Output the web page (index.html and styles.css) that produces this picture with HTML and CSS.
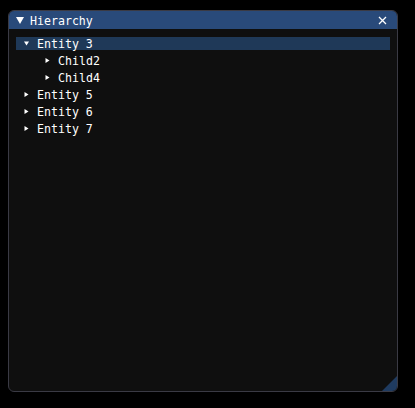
FILE: index.html
```html
<!DOCTYPE html>
<html>
<head>
<meta charset="utf-8">
<link rel="stylesheet" href="styles.css">
</head>
<body>
<div class="window">
  <div class="titlebar">
    <svg class="title-arrow" width="8" height="7" viewBox="0 0 8 7"><polygon points="0,0 8,0 4,7" fill="#fff"/></svg>
    <span class="title">Hierarchy</span>
    <svg class="close" width="9" height="9" viewBox="0 0 9 9"><path d="M1 1 L8 8 M8 1 L1 8" stroke="#fff" stroke-width="1.3"/></svg>
  </div>
  <div class="content">
    <div class="row selected">
      <svg class="arrow" width="5" height="5" viewBox="0 0 5 5"><polygon points="0,0.5 5,0.5 2.5,4.5" fill="#fff"/></svg>
      <span class="label">Entity 3</span>
    </div>
    <div class="row indent">
      <svg class="arrow" width="5" height="5" viewBox="0 0 5 5"><polygon points="0.5,0 4.5,2.5 0.5,5" fill="#fff"/></svg>
      <span class="label">Child2</span>
    </div>
    <div class="row indent">
      <svg class="arrow" width="5" height="5" viewBox="0 0 5 5"><polygon points="0.5,0 4.5,2.5 0.5,5" fill="#fff"/></svg>
      <span class="label">Child4</span>
    </div>
    <div class="row">
      <svg class="arrow" width="5" height="5" viewBox="0 0 5 5"><polygon points="0.5,0 4.5,2.5 0.5,5" fill="#fff"/></svg>
      <span class="label">Entity 5</span>
    </div>
    <div class="row">
      <svg class="arrow" width="5" height="5" viewBox="0 0 5 5"><polygon points="0.5,0 4.5,2.5 0.5,5" fill="#fff"/></svg>
      <span class="label">Entity 6</span>
    </div>
    <div class="row">
      <svg class="arrow" width="5" height="5" viewBox="0 0 5 5"><polygon points="0.5,0 4.5,2.5 0.5,5" fill="#fff"/></svg>
      <span class="label">Entity 7</span>
    </div>
  </div>
  <svg class="grip" width="15" height="15" viewBox="0 0 15 15"><polygon points="15,0 15,15 0,15" fill="#1f3b60"/></svg>
</div>
</body>
</html>
```

FILE: styles.css
```css
html, body {
  margin: 0;
  padding: 0;
  background: #000;
}
body {
  padding: 10px 0 0 8px;
  font-family: "DejaVu Sans Mono", "Liberation Mono", monospace;
  font-size: 11.6px;
  color: #fff;
}
.window {
  position: relative;
  box-sizing: border-box;
  width: 390px;
  height: 382px;
  background: #0f0f0f;
  border: 1px solid #3a3a44;
  border-radius: 6px;
  overflow: hidden;
}
.titlebar {
  display: flex;
  align-items: center;
  height: 18px;
  background: #294a7a;
  padding: 0 6px 0 6px;
  margin-top: -1px;
  margin-left: -1px;
  margin-right: -1px;
  border-top: 1px solid #3a3a44;
  border-left: 1px solid #3a3a44;
  border-right: 1px solid #3a3a44;
  border-radius: 6px 6px 0 0;
}
.title-arrow {
  margin-left: 1px;
  margin-right: 6px;
  margin-top: 1px;
}
.title {
  flex: 1;
  line-height: 18px;
  padding-top: 1px;
}
.close {
  margin-right: 4px;
}
.content {
  display: flex;
  flex-direction: column;
  gap: 4px;
  padding: 8px 7px 0 7px;
}
.row {
  display: flex;
  align-items: center;
  height: 13px;
  padding-left: 8px;
  white-space: pre;
}
.row .arrow {
  margin-right: 8px;
}
.label {
  line-height: 13px;
  padding-top: 2px;
}
.row.indent {
  padding-left: 29px;
}
.row.selected {
  background: #1f3958;
}
.grip {
  position: absolute;
  right: 0;
  bottom: 0;
}
```
